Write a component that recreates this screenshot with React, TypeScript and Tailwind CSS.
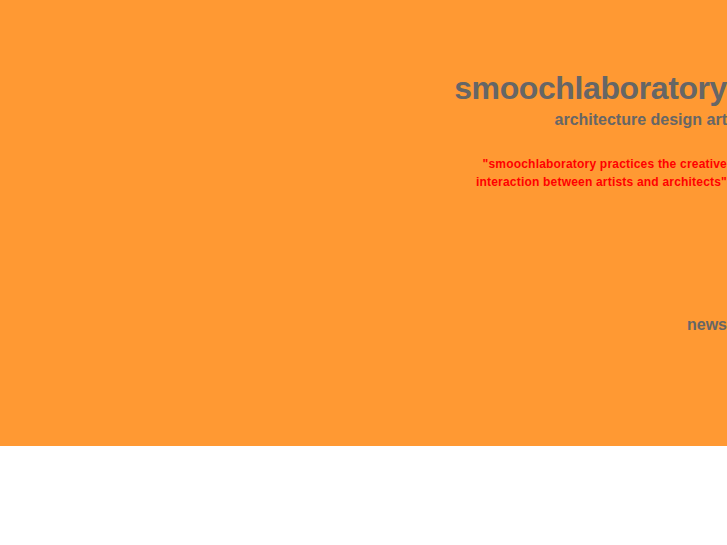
export default function App() {
  return (
    <div className="w-[727px] h-[545px] bg-white overflow-hidden" style={{ fontFamily: '"Liberation Sans", Arial, sans-serif' }}>
      <div className="h-[446px] bg-[#ff9933] flex flex-col items-end text-right font-bold">
        <h1 className="mt-[70px] text-[32px] leading-[37px] text-[#666666] tracking-[-0.4px]">smoochlaboratory</h1>
        <p className="mt-[3px] text-[16px] leading-[19px] text-[#666666]">architecture design art</p>
        <p className="mt-[26px] text-[12px] leading-[18px] text-[#ff0000] tracking-[0.2px]">
          "smoochlaboratory practices the creative
          <br />
          interaction between artists and architects"
        </p>
        <p className="mt-[124px] text-[16px] leading-[19px] text-[#666666]">news</p>
      </div>
    </div>
  );
}
